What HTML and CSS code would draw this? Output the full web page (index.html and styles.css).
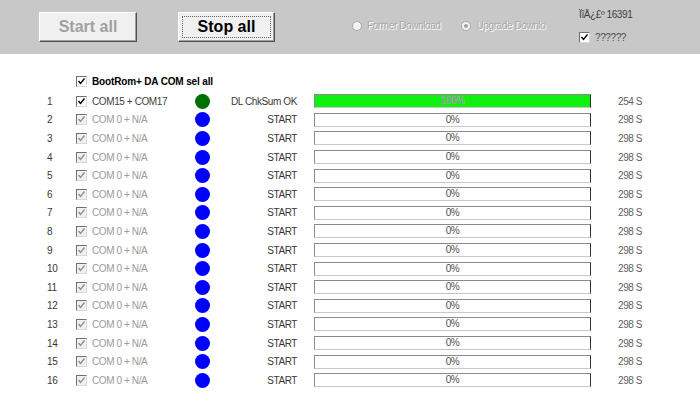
FILE: index.html
```html
<!DOCTYPE html>
<html lang="en">
<head>
    <meta charset="UTF-8">
    <title>Download Tool</title>
    <link rel="stylesheet" href="styles.css">
</head>
<body>
    <div class="topbar">
        <button class="bigbtn off">Start all</button>
        <button class="bigbtn stop"><span class="focus">Stop all</span></button>
        <div class="radios">
            <span class="radio"></span><span class="dim first">Former Download</span>
            <span class="radio on"></span><span class="dim">Upgrade Downlo</span>
        </div>
        <div class="info">
            <div class="proj">ÏîÄ¿£º 16391</div>
            <div class="opt"><span class="chk white"><svg viewBox="0 0 9 9"><polyline points="1.5,4 3.5,6.5 7.5,1.5"/></svg></span>??????</div>
        </div>
    </div>

    <div class="list">
        <div class="head">
            <span class="chk"><svg viewBox="0 0 9 9"><polyline points="1.5,4 3.5,6.5 7.5,1.5"/></svg></span>
            <b>BootRom+ DA COM sel all</b>
        </div>
        <div id="rows"></div>
    </div>

    <script>
        let rows = document.getElementById('rows')
        let check = '<svg viewBox="0 0 9 9"><polyline points="1.5,4 3.5,6.5 7.5,1.5"/></svg>'
        for (let i = 1; i <= 16; i++) {
            let done = i === 1
            let row = document.createElement('div')
            row.className = 'row'
            row.innerHTML =
                '<span class="num">' + i + '</span>' +
                '<span class="port' + (done ? '' : ' grey') + '"><span class="chk' + (done ? '' : ' grey') + '">' + check + '</span>' +
                (done ? 'COM15 + COM17' : 'COM 0 + N/A') + '</span>' +
                '<span class="dot' + (done ? ' ok' : '') + '"></span>' +
                '<span class="state">' + (done ? 'DL ChkSum OK' : 'START') + '</span>' +
                '<span class="bar' + (done ? ' full' : '') + '">' + (done ? '100%' : '0%') + '</span>' +
                '<span class="time">' + (done ? '254 S' : '298 S') + '</span>'
            rows.appendChild(row)
        }
    </script>
</body>
</html>
```

FILE: styles.css
```css
body {
    margin: 0;
    background: #fff;
    font-family: "Liberation Sans", Arial, sans-serif;
    font-size: 10px;
    letter-spacing: -0.4px;
    color: #383838;
}

.topbar {
    height: 54px;
    background: #c8c8c8;
    display: flex;
    align-items: flex-start;
}

.bigbtn {
    margin-top: 12px;
    height: 30px;
    background: #f0f0f0;
    font-family: "Liberation Sans", Arial, sans-serif;
    font-weight: bold;
    font-size: 16px;
    letter-spacing: 0;
    border: 1px solid;
    border-color: #fff #505050 #505050 #fff;
    box-shadow: inset -1px -1px 0 #a0a0a0;
    padding: 0;
}

.off {
    margin-left: 39px;
    width: 98px;
    color: #a0a0a0;
}

.stop {
    margin-left: 41px;
    width: 97px;
    color: #000;
    padding: 3px;
}

.focus {
    display: flex;
    align-items: center;
    justify-content: center;
    height: 100%;
    border: 1px dotted #606060;
    box-sizing: border-box;
}

.radios {
    display: flex;
    align-items: center;
    width: 227px;
    flex: none;
    margin-top: 20px;
    margin-left: 77px;
}

.radio {
    width: 8px;
    height: 8px;
    border-radius: 50%;
    background: #f4f4f4;
    border: 1px solid #a8a8a8;
    margin-right: 5px;
    position: relative;
}

.radio.on::after {
    content: "";
    position: absolute;
    left: 2px;
    top: 2px;
    width: 4px;
    height: 4px;
    border-radius: 50%;
    background: #a0a0a0;
}

.dim {
    color: #a8a8a8;
    text-shadow: 1px 1px 0 #fff;
}

.dim.first {
    margin-right: 21px;
}

.info {
    margin-top: 9px;
    color: #404040;
}

.proj {
    height: 15px;
}

.opt {
    display: flex;
    align-items: center;
    margin-top: 8px;
    color: #505050;
}

.chk {
    display: inline-flex;
    width: 9px;
    height: 9px;
    border: 1px solid;
    border-color: #707070 #d8d8d8 #d8d8d8 #707070;
    background: #fff;
    margin-right: 5px;
    flex: none;
}

.chk svg {
    width: 9px;
    height: 9px;
    fill: none;
    stroke: #000;
    stroke-width: 1.4;
}

.chk.grey {
    background: #f0f0f0;
}

.chk.grey svg {
    stroke: #909090;
}

.list {
    padding: 18px 0 0 47px;
}

.head {
    display: flex;
    align-items: center;
    height: 18.6px;
    margin-left: 29px;
    margin-bottom: 1.4px;
    color: #000;
    letter-spacing: -0.15px;
}

.row {
    display: grid;
    grid-template-columns: 29px 119px 15px 87px 294px auto;
    align-items: center;
    height: 18.6px;
}

.port {
    display: flex;
    align-items: center;
    color: #404040;
}

.port.grey {
    color: #9a9a9a;
}

.dot {
    width: 15px;
    height: 15px;
    border-radius: 50%;
    background: #0000ff;
}

.dot.ok {
    background: #007000;
}

.state {
    text-align: right;
}

.bar {
    margin-left: 17px;
    width: 277px;
    height: 14px;
    box-sizing: border-box;
    border: 1px solid;
    border-color: #8a8a8a #303030 #c8c8c8 #8a8a8a;
    background: #fff;
    text-align: center;
    line-height: 12px;
    color: #505050;
}

.bar.full {
    background: #10f010;
    color: #d878e0;
}

.time {
    padding-left: 27px;
    color: #606060;
}
```
